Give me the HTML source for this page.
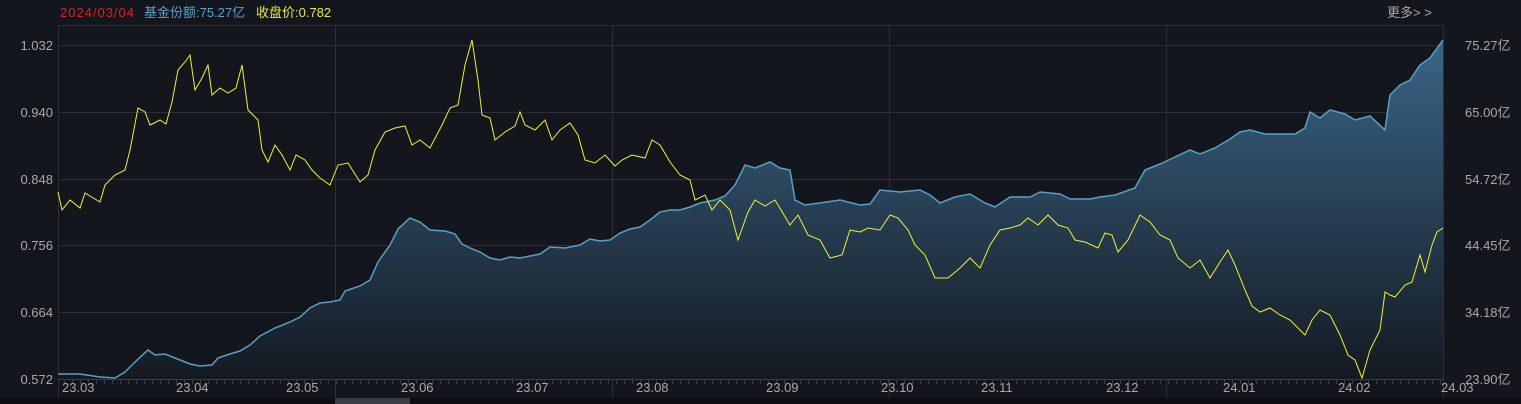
<!DOCTYPE html>
<html><head><meta charset="utf-8"><style>
body{margin:0;background:#13161c;width:1521px;height:404px;overflow:hidden;font-family:"Liberation Sans","Noto Sans CJK SC",sans-serif}
svg{position:absolute;left:0;top:0}
</style></head><body>
<svg width="1521" height="404" xmlns="http://www.w3.org/2000/svg" font-family="Liberation Sans, Noto Sans CJK SC, sans-serif">
<defs><linearGradient id="g" x1="0" y1="0" x2="0" y2="1"><stop offset="0" stop-color="#3a6586"/><stop offset="1" stop-color="#141a22"/></linearGradient>
<pattern id="tk" width="8" height="5" patternUnits="userSpaceOnUse"><rect x="0" y="0" width="1" height="5" fill="#3a3d43"/></pattern></defs>
<rect width="1521" height="404" fill="#13161c"/>
<g stroke="#2c2f35" stroke-width="1" fill="none">
<line x1="58" y1="25.5" x2="1443" y2="25.5"/>
<line x1="58" y1="45.5" x2="1443" y2="45.5"/>
<line x1="58" y1="112.5" x2="1443" y2="112.5"/>
<line x1="58" y1="179.5" x2="1443" y2="179.5"/>
<line x1="58" y1="245.5" x2="1443" y2="245.5"/>
<line x1="58" y1="312.5" x2="1443" y2="312.5"/>
<line x1="58.5" y1="25" x2="58.5" y2="400"/>
<line x1="335.5" y1="25" x2="335.5" y2="400"/>
<line x1="612.5" y1="25" x2="612.5" y2="400"/>
<line x1="889.5" y1="25" x2="889.5" y2="400"/>
<line x1="1166.5" y1="25" x2="1166.5" y2="400"/>
<line x1="1443.5" y1="25" x2="1443.5" y2="400"/>
</g>
<polygon fill="url(#g)" points="58,379 58,374 80,374 100,377 115,378 125,372 135,362 148,350 155,355 165,354 175,358 190,364 200,366 212,365 218,358 230,354 240,351 250,345 260,336 275,328 290,322 300,317 310,308 320,303 330,302 340,300 345,291 360,286 370,280 378,262 390,245 398,229 410,218 420,222 430,230 445,231 455,234 462,244 470,248 480,252 490,258 500,260 510,257 520,258 540,254 550,247 565,248 580,245 590,239 600,241 610,240 620,233 630,229 640,227 650,220 660,212 670,210 680,210 690,207 700,203 715,200 725,196 735,185 745,165 755,168 770,162 780,168 790,170 795,200 805,205 820,203 840,200 860,205 870,204 880,190 900,192 920,190 930,195 940,203 955,197 970,194 985,203 995,207 1010,197 1030,197 1040,192 1060,194 1070,199 1090,199 1100,197 1115,195 1135,188 1145,170 1160,164 1175,157 1190,150 1200,154 1215,148 1230,139 1240,132 1250,130 1265,134 1280,134 1295,134 1305,128 1310,112 1320,118 1330,110 1345,114 1355,120 1370,116 1385,130 1390,95 1400,85 1410,80 1420,65 1430,58 1443,40 1443,379"/>
<polyline fill="none" stroke="#5a9fc8" stroke-width="1.5" points="58,374 80,374 100,377 115,378 125,372 135,362 148,350 155,355 165,354 175,358 190,364 200,366 212,365 218,358 230,354 240,351 250,345 260,336 275,328 290,322 300,317 310,308 320,303 330,302 340,300 345,291 360,286 370,280 378,262 390,245 398,229 410,218 420,222 430,230 445,231 455,234 462,244 470,248 480,252 490,258 500,260 510,257 520,258 540,254 550,247 565,248 580,245 590,239 600,241 610,240 620,233 630,229 640,227 650,220 660,212 670,210 680,210 690,207 700,203 715,200 725,196 735,185 745,165 755,168 770,162 780,168 790,170 795,200 805,205 820,203 840,200 860,205 870,204 880,190 900,192 920,190 930,195 940,203 955,197 970,194 985,203 995,207 1010,197 1030,197 1040,192 1060,194 1070,199 1090,199 1100,197 1115,195 1135,188 1145,170 1160,164 1175,157 1190,150 1200,154 1215,148 1230,139 1240,132 1250,130 1265,134 1280,134 1295,134 1305,128 1310,112 1320,118 1330,110 1345,114 1355,120 1370,116 1385,130 1390,95 1400,85 1410,80 1420,65 1430,58 1443,40"/>
<polyline fill="none" stroke="#f0f032" stroke-width="1" points="58,192 62,210 70,200 80,208 85,193 100,202 105,185 115,175 125,170 130,150 138,108 145,112 150,125 160,120 166,124 172,102 178,70 185,62 190,55 195,90 202,78 208,65 212,95 220,88 228,93 236,88 242,65 248,110 258,120 262,150 268,162 275,145 282,155 290,170 296,155 305,160 312,170 320,178 330,185 338,165 348,163 360,182 368,175 375,150 385,132 395,128 405,126 412,145 420,140 430,148 442,125 450,108 458,105 465,65 472,40 478,80 482,115 490,118 495,140 505,132 515,126 520,112 525,125 535,130 545,120 552,140 560,130 570,123 578,135 585,160 595,163 605,155 615,166 622,160 632,155 645,158 652,140 660,145 670,162 680,175 690,180 695,200 705,195 712,210 720,200 730,210 738,240 748,212 755,200 765,206 775,200 790,225 798,215 808,235 820,240 830,258 842,255 850,230 860,232 868,228 880,230 890,215 898,218 908,230 915,245 925,255 935,278 948,278 960,268 970,258 980,268 990,245 1000,230 1010,228 1020,225 1028,218 1038,225 1048,215 1058,225 1068,228 1075,240 1085,242 1098,248 1105,233 1112,235 1118,252 1128,240 1140,215 1150,222 1160,235 1170,240 1178,258 1190,268 1200,260 1210,278 1220,262 1228,250 1235,265 1245,290 1252,306 1260,312 1270,308 1280,315 1290,320 1300,330 1305,335 1312,320 1320,310 1330,315 1340,335 1348,355 1355,360 1362,378 1370,350 1380,330 1385,292 1390,295 1395,297 1405,285 1412,282 1420,255 1425,272 1432,245 1437,232 1443,228"/>
<line x1="58" y1="379.5" x2="1443" y2="379.5" stroke="#3a3d43"/>
<rect x="58" y="380" width="1385" height="4" fill="url(#tk)"/>
<g font-size="13" fill="#a8a8a8">
<text x="53" y="50" text-anchor="end">1.032</text>
<text x="53" y="117" text-anchor="end">0.940</text>
<text x="53" y="184" text-anchor="end">0.848</text>
<text x="53" y="250" text-anchor="end">0.756</text>
<text x="53" y="317" text-anchor="end">0.664</text>
<text x="53" y="384" text-anchor="end">0.572</text>
<text x="1465" y="50">75.27亿</text>
<text x="1465" y="117">65.00亿</text>
<text x="1465" y="184">54.72亿</text>
<text x="1465" y="250">44.45亿</text>
<text x="1465" y="317">34.18亿</text>
<text x="1465" y="384">23.90亿</text>
<text x="62" y="392">23.03</text>
<text x="176" y="392">23.04</text>
<text x="286" y="392">23.05</text>
<text x="401" y="392">23.06</text>
<text x="516" y="392">23.07</text>
<text x="636" y="392">23.08</text>
<text x="766" y="392">23.09</text>
<text x="881" y="392">23.10</text>
<text x="981" y="392">23.11</text>
<text x="1106" y="392">23.12</text>
<text x="1223" y="392">24.01</text>
<text x="1338" y="392">24.02</text>
<text x="1441" y="392">24.03</text>
<text x="1387" y="17">更多&gt; &gt;</text>
</g>
<g font-size="13">
<text x="60" y="17" fill="#d82020" textLength="74" lengthAdjust="spacing">2024/03/04</text>
<text x="144" y="17" fill="#5aa0cc">基金份额:75.27亿</text>
<text x="256" y="17" fill="#e8e83a">收盘价:0.782</text>
</g>
<rect x="0" y="398" width="1521" height="6" fill="#0c0e12"/>
<rect x="335" y="398" width="75" height="6" fill="#3a3d44"/>
</svg>
</body></html>
